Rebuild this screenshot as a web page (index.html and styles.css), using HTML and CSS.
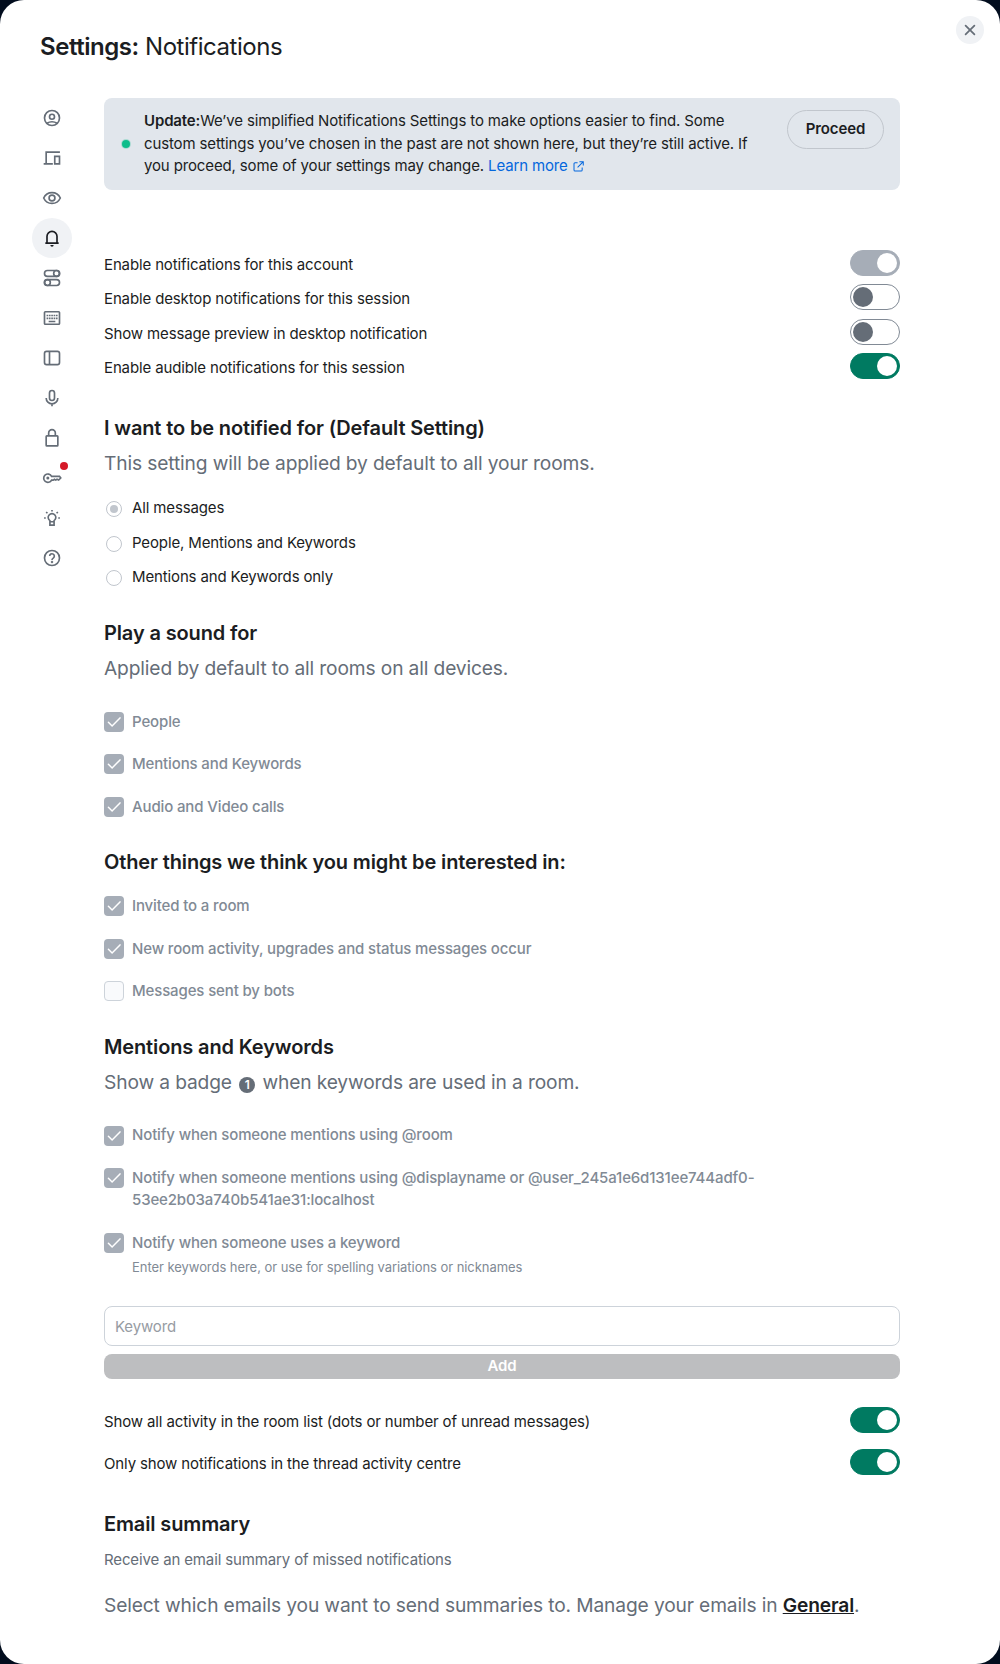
FILE: index.html
```html
<!DOCTYPE html>
<html lang="en">
<head>
<meta charset="utf-8">
<title>Settings: Notifications</title>
<link rel="stylesheet" href="styles.css">
</head>
<body>
<svg class="defs" aria-hidden="true">
  <symbol id="check" viewBox="0 0 20 20"><path d="M4.400 10.300l3.700 3.700 7.900-8.100" fill="none" stroke="#fff" stroke-width="1.500" stroke-linecap="round"/></symbol>
</svg>
<main class="dialog">
  <button class="close" aria-label="Close"><svg width="20" height="20" viewBox="0 0 20 20"><path d="M5.600 5.600l8.800 8.800M14.400 5.600l-8.800 8.800" fill="none" stroke="currentColor" stroke-width="1.750" stroke-linecap="round"/></svg></button>
  <h1 class="title"><b>Settings:</b> Notifications</h1>
  <div class="body">
    <nav class="nav">
      <a class="nav-item"><svg viewBox="0 0 24 24"><circle cx="12" cy="12" r="9"/><circle cx="12" cy="10.500" r="3"/><path d="M6 18.300c1.800-1.200 3.800-1.800 6-1.800s4.200.6 6 1.800"/></svg></a>
      <a class="nav-item"><svg viewBox="0 0 24 24"><path d="M21.500 5H5v13M2 19h11"/><path d="M15.300 10h5.700v9h-5.700z"/></svg></a>
      <a class="nav-item"><svg viewBox="0 0 24 24"><path d="M2 12c2-4.300 5.700-6.500 10-6.500S20 7.700 22 12c-2 4.300-5.700 6.500-10 6.500S4 16.300 2 12z"/><circle cx="12" cy="12" r="3.500"/></svg></a>
      <a class="nav-item selected"><svg viewBox="0 0 24 24"><path d="M4 18.200h16M6 18v-8a6 6 0 0 1 12 0v8"/><path d="M10 20.500h4a2 2 0 0 1-4 0z" class="solid"/></svg></a>
      <a class="nav-item"><svg viewBox="0 0 24 24"><rect x="3" y="3" width="18" height="7" rx="3.500"/><circle cx="17.500" cy="6.500" r="3.500"/><rect x="3" y="14" width="18" height="7" rx="3.500"/><circle cx="6.500" cy="17.500" r="3.500"/></svg></a>
      <a class="nav-item"><svg viewBox="0 0 24 24"><rect x="3" y="4.500" width="18" height="15" rx="1"/><path class="solid" d="M5.500 8h2v2h-2zM8.300 8h2v2h-2zM11.100 8h2v2h-2zM13.900 8h2v2h-2zM16.700 8h2v2h-2zM5.500 11.500h2v2h-2zM8.300 11.500h2v2h-2zM11.100 11.500h2v2h-2zM13.900 11.500h2v2h-2zM16.700 11.500h2v2h-2zM8 15.200h8v2H8z"/></svg></a>
      <a class="nav-item"><svg viewBox="0 0 24 24"><rect x="3" y="4" width="18" height="16" rx="2.500"/><path d="M9 4v16"/></svg></a>
      <a class="nav-item"><svg viewBox="0 0 24 24"><rect x="9" y="3" width="6" height="12" rx="3"/><path d="M5 12a7 7 0 0 0 14 0M12 19v3"/></svg></a>
      <a class="nav-item"><svg viewBox="0 0 24 24"><rect x="5" y="9.500" width="14" height="12" rx=".8"/><path d="M8 9V6a4 4 0 0 1 8 0v3"/></svg></a>
      <a class="nav-item"><svg viewBox="0 0 24 24"><path d="M11.500 10H21l1.500 2-2.500 2.500-2-1-1.500 1-1.500-1-1.500 1h-2a5 5 0 1 1 0-4.500z"/><circle cx="7" cy="12" r="1.800" class="solid"/></svg><i class="alert"></i></a>
      <a class="nav-item"><svg viewBox="0 0 24 24"><path d="M9.500 16.500v-1.300a4.600 4.600 0 1 1 5 0v1.300zM9.500 17v3.500h5V17"/><path d="M12 2.300v2M5 4.800l1.500 1.500M19 4.800l-1.500 1.500M2.500 12h2M19.500 12h2"/></svg></a>
      <a class="nav-item"><svg viewBox="0 0 24 24"><circle cx="12" cy="12" r="9"/><path d="M9.200 9.600a2.800 2.800 0 1 1 4.300 2.500c-1 .7-1.500 1.100-1.500 2.200"/><circle cx="12" cy="16.700" r=".5"/></svg></a>
    </nav>
    <div class="content">
      <section class="banner">
        <i class="dot"></i>
        <p class="banner-text"><b>Update:</b>We’ve simplified Notifications Settings to make options easier to find. Some custom settings you’ve chosen in the past are not shown here, but they’re still active. If you proceed, some of your settings may change. <a class="learn">Learn more<svg width="11" height="11" viewBox="0 0 12 12"><path d="M5 2H2.200Q1.100 2 1.100 3.100v6.700q0 1.100 1.100 1.100h6.700q1.100 0 1.100-1.100V7M7 .8h4.200V5M11 1L5 7"/></svg></a></p>
        <button class="proceed">Proceed</button>
      </section>

      <div class="toggles">
        <div class="toggle-row"><span>Enable notifications for this account</span><i class="toggle on disabled"></i></div>
        <div class="toggle-row"><span>Enable desktop notifications for this session</span><i class="toggle"></i></div>
        <div class="toggle-row"><span>Show message preview in desktop notification</span><i class="toggle"></i></div>
        <div class="toggle-row"><span>Enable audible notifications for this session</span><i class="toggle on"></i></div>
      </div>

      <h2 class="heading h-default">I want to be notified for (Default Setting)</h2>
      <p class="sub">This setting will be applied by default to all your rooms.</p>
      <div class="radios">
        <div class="radio-row"><i class="radio checked"></i><span>All messages</span></div>
        <div class="radio-row"><i class="radio"></i><span>People, Mentions and Keywords</span></div>
        <div class="radio-row"><i class="radio"></i><span>Mentions and Keywords only</span></div>
      </div>

      <h2 class="heading h-sound">Play a sound for</h2>
      <p class="sub">Applied by default to all rooms on all devices.</p>
      <div class="checks">
        <div class="check-row"><svg class="box"><use href="#check"/></svg><span>People</span></div>
        <div class="check-row"><svg class="box"><use href="#check"/></svg><span>Mentions and Keywords</span></div>
        <div class="check-row"><svg class="box"><use href="#check"/></svg><span>Audio and Video calls</span></div>
      </div>

      <h2 class="heading h-other">Other things we think you might be interested in:</h2>
      <div class="checks close-checks">
        <div class="check-row"><svg class="box"><use href="#check"/></svg><span>Invited to a room</span></div>
        <div class="check-row"><svg class="box"><use href="#check"/></svg><span>New room activity, upgrades and status messages occur</span></div>
        <div class="check-row"><i class="box empty"></i><span>Messages sent by bots</span></div>
      </div>

      <h2 class="heading h-mentions">Mentions and Keywords</h2>
      <p class="sub">Show a badge <span class="badge">1</span> when keywords are used in a room.</p>
      <div class="checks mention-checks">
        <div class="check-row"><svg class="box"><use href="#check"/></svg><span>Notify when someone mentions using @room</span></div>
        <div class="check-row"><svg class="box"><use href="#check"/></svg><span>Notify when someone mentions using @displayname or @user_245a1e6d131ee744adf0-53ee2b03a740b541ae31:localhost</span></div>
        <div class="check-row"><svg class="box"><use href="#check"/></svg><span>Notify when someone uses a keyword</span></div>
      </div>
      <p class="hint">Enter keywords here, or use for spelling variations or nicknames</p>

      <input class="keyword" placeholder="Keyword">
      <button class="add">Add</button>

      <div class="toggles activity">
        <div class="toggle-row"><span>Show all activity in the room list (dots or number of unread messages)</span><i class="toggle on"></i></div>
        <div class="toggle-row"><span>Only show notifications in the thread activity centre</span><i class="toggle on"></i></div>
      </div>

      <h2 class="heading h-email">Email summary</h2>
      <p class="note">Receive an email summary of missed notifications</p>
      <p class="sub manage">Select which emails you want to send summaries to. Manage your emails in <a class="general">General</a>.</p>
    </div>
  </div>
</main>
</body>
</html>
```
FILE: styles.css
```css
* { box-sizing: border-box; }
body {
  margin: 0;
  background: #020d1e;
  color: #1b1d22;
  font: 400 15px/22px Inter, sans-serif;
  letter-spacing: -0.135px;
}
h1, h2, p { margin: 0; }
button, input { font: inherit; letter-spacing: inherit; padding: 0; border: 0; }
b { font-weight: 600; }
.defs { display: none; }
.dialog { position: relative; height: 1664px; border-radius: 24px; background: #fff; }
.close {
  position: absolute; top: 16px; right: 16px; width: 28px; height: 28px;
  display: grid; place-items: center; border-radius: 50%;
  background: #f0f2f5; color: #656d77;
}
.title { height: 98px; padding: 31px 0 0 40px; font-size: 24px; line-height: 32px; font-weight: 400; letter-spacing: -0.019em; }
.body { display: flex; gap: 32px; padding-left: 32px; }
.nav { width: 40px; display: flex; flex-direction: column; }
.nav-item {
  position: relative; height: 40px; border-radius: 50%;
  display: grid; place-items: center; color: #656d77;
}
.nav-item svg { width: 20px; height: 20px; fill: none; stroke: currentColor; stroke-width: 2; }
.nav-item .solid { fill: currentColor; stroke: none; }
.selected { background: #f0f2f5; color: #1b1d22; }
.alert { position: absolute; top: 4px; right: 4px; width: 8px; height: 8px; border-radius: 50%; background: #d51928; }

.content { width: 796px; }
.banner { display: flex; height: 92px; padding: 12px 16px; border-radius: 8px; background: #e1e6ec; }
.dot { flex: none; align-self: center; width: 8px; height: 8px; margin: 0 14px 0 2px; border-radius: 50%; background: #0dbd8b; box-shadow: 0 0 0 1px rgba(13, 189, 139, .25); }
.banner-text { width: 610px; line-height: 22.5px; }
.learn { color: #0467dd; }
.learn svg { margin-left: 5px; vertical-align: -1px; fill: none; stroke: currentColor; stroke-width: 1.1; }
.proceed {
  margin-left: auto; width: 97px; height: 39px; padding-bottom: 1px; border: 1px solid #c1c6cd; border-radius: 20px;
  background: transparent; color: #1b1d22; font-weight: 600;
}

.toggles { display: flex; flex-direction: column; gap: 8.33px; margin-top: 60px; }
.toggle-row { display: flex; justify-content: space-between; height: 26px; line-height: 29px; }
.toggle { width: 50px; height: 26px; padding: 2px; border: 1px solid #818a95; border-radius: 13px; }
.toggle::before { content: ""; display: block; width: 20px; height: 20px; border-radius: 50%; background: #656d77; }
.toggle.on { border-color: #007a61; background: #007a61; }
.toggle.on::before { margin-left: auto; background: #fff; }
.toggle.disabled { border-color: #a6adb7; background: #a6adb7; }

.heading { font-size: 20px; line-height: 24px; font-weight: 600; }
.h-default { margin-top: 37px; }
.h-sound { margin-top: 34.8px; }
.h-other { margin-top: 30.75px; }
.h-mentions { margin-top: 31.25px; }
.h-email { margin-top: 37px; }
.sub { margin-top: 9.2px; font-size: 19.2px; line-height: 28px; color: #656d77; }

.radios { display: flex; flex-direction: column; gap: 18.5px; margin-top: 24px; }
.radio-row { display: flex; gap: 10px; height: 16px; padding-left: 2px; line-height: 14px; }
.radio { width: 16px; height: 16px; padding: 3px; border: 1px solid #c1c6cd; border-radius: 50%; }
.checked::before { content: ""; display: block; width: 8px; height: 8px; border-radius: 50%; background: #c1c6cd; }

.checks { display: flex; flex-direction: column; gap: 20px; margin-top: 29.55px; font-weight: 500; line-height: 22.5px; color: #818a95; }
.close-checks { margin-top: 22.25px; }
.check-row { display: flex; gap: 8px; }
.check-row span { margin: -0.9px 0 0.9px; }
.mention-checks .check-row span { margin: -1.25px 0 1.25px; }
.box { flex: none; width: 20px; height: 20px; border-radius: 4px; background: #a6adb7; }
.box.empty { border: 1px solid #cdd3da; background: #f9fafc; }
.badge {
  display: inline-block; width: 16px; height: 16px; margin: 0 2px; border-radius: 50%;
  background: #656d77; color: #fff; font-size: 12px; line-height: 16px; font-weight: 600;
  text-align: center; vertical-align: 0;
}
.hint { margin: 1.25px 0 0 28px; font-size: 13px; line-height: 20px; letter-spacing: -0.05px; color: #818a95; }
.keyword { display: block; width: 100%; height: 40px; margin-top: 29px; padding: 1px 10px 0; border: 1px solid #cdd3da; border-radius: 8px; }
.keyword::placeholder { color: #979ca3; }
.add { display: block; width: 100%; height: 25px; margin-top: 8px; border-radius: 8px; background: #bdbec0; color: #fff; font-weight: 600; }
.activity { gap: 16px; margin-top: 28px; }
.note { margin-top: 13.5px; color: #656d77; }
.manage { margin-top: 19.7px; }
.general { color: #1b1d22; font-weight: 600; text-decoration: underline; }
```
